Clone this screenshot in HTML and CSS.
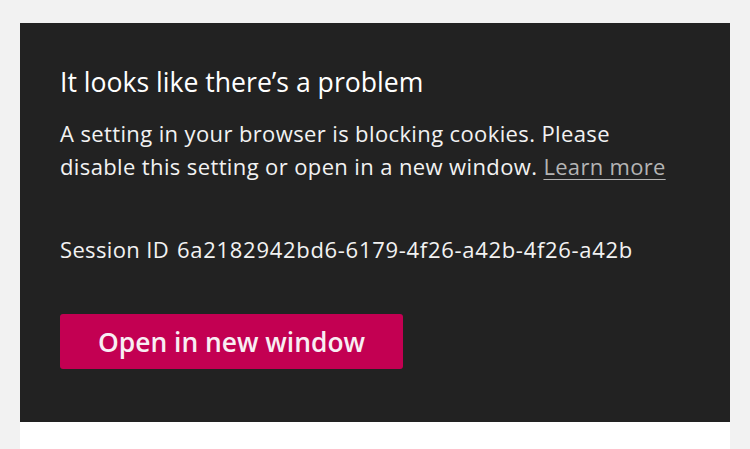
FILE: index.html
```html
<!DOCTYPE html>
<html lang="en">
<head>
<meta charset="utf-8">
<title>Problem</title>
<link rel="stylesheet" href="styles.css">
</head>
<body>
<main class="page">
  <section class="panel">
    <h1 class="title">It looks like there’s a problem</h1>
    <p class="message">A setting in your browser is blocking cookies. Please disable this setting or open in a new window. <a class="learn" href="#">Learn more</a></p>
    <p class="session"><span class="session-label">Session ID</span> <span class="session-id">6a2182942bd6-6179-4f26-a42b-4f26-a42b</span></p>
    <button class="open-btn" type="button">Open in new window</button>
  </section>
  <section class="below"></section>
</main>
</body>
</html>
```
FILE: styles.css
```css
html, body {
  margin: 0;
  padding: 0;
  background: #f2f2f2;
}
body {
  font-family: "Open Sans", "Noto Sans", sans-serif;
  color: #fff;
}
.page {
  padding: 23px 20px 0 20px;
  display: flex;
  flex-direction: column;
}
.panel {
  background: #222222;
  padding: 42px 40px 53px 40px;
  display: flex;
  flex-direction: column;
  align-items: flex-start;
}
.title {
  margin: 0;
  font-size: 26.6px;
  font-weight: 400;
  line-height: 34px;
  color: #ffffff;
}
.message {
  margin: 18px 0 0 0;
  max-width: 614px;
  font-size: 22px;
  letter-spacing: 0.38px;
  line-height: 33px;
  color: #f2f2f2;
}
.learn {
  color: #b4b4b4;
  text-decoration: underline;
  text-decoration-thickness: 1px;
  text-underline-offset: 4px;
  letter-spacing: 0.3px;
}
.session {
  margin: 50px 0 0 0;
  font-size: 22px;
  letter-spacing: 0.35px;
  line-height: 33px;
  color: #f2f2f2;
}
.session-id {
  margin-left: 2px;
  letter-spacing: 0.7px;
}
.open-btn {
  margin-top: 48px;
  background: #c30052;
  color: #f8eef3;
  border: none;
  border-radius: 3px;
  font-family: inherit;
  font-size: 26.4px;
  font-weight: 600;
  line-height: 36px;
  height: 55px;
  padding: 0 38px;
}
.below {
  background: #ffffff;
  height: 40px;
}
```
